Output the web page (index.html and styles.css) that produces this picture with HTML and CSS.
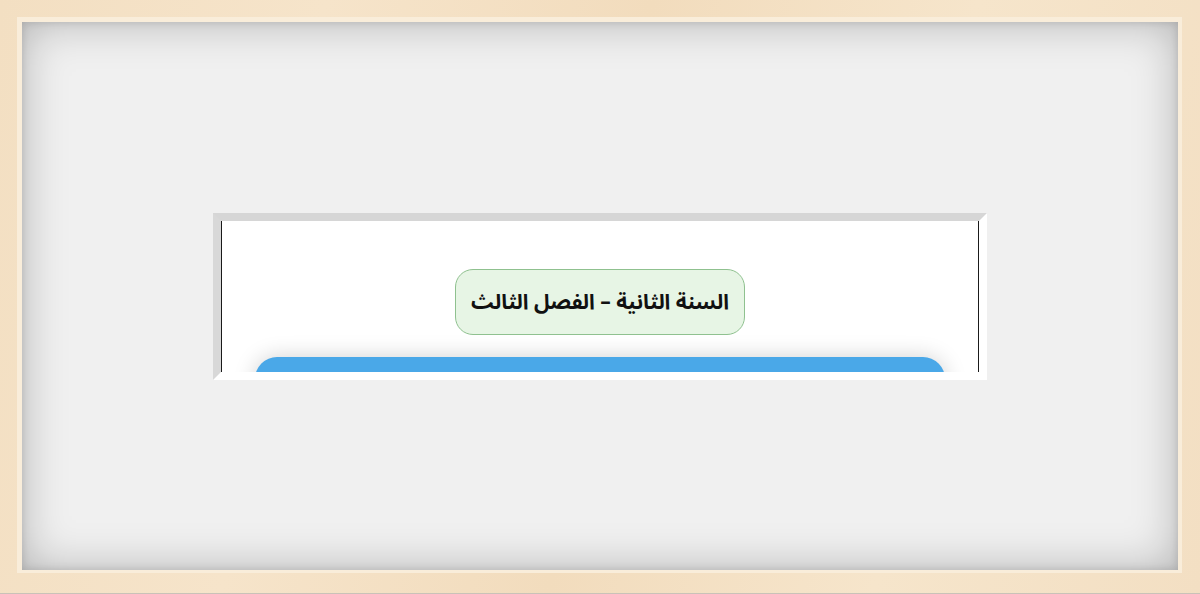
FILE: index.html
```html
<!DOCTYPE html>
<html lang="ar">
<head>
<meta charset="utf-8">
<title>Frame</title>
<link rel="stylesheet" href="styles.css">
</head>
<body>
<div class="frame">
  <div class="bevel">
    <div class="mat">
      <div class="window">
        <div class="screen">
          <div class="pill" dir="rtl">السنة الثانية – الفصل الثالث</div>
          <div class="card"></div>
        </div>
      </div>
    </div>
  </div>
</div>
</body>
</html>
```
FILE: styles.css
```css
html, body {
  margin: 0;
  padding: 0;
}
body {
  width: 1200px;
  height: 594px;
  overflow: hidden;
  font-family: "Noto Sans Arabic", "DejaVu Sans", sans-serif;
}
.frame {
  box-sizing: border-box;
  width: 1200px;
  height: 594px;
  padding: 17px 18px 20px 17px;
  border-bottom: 1px solid #c9c2b8;
  background: linear-gradient(100deg, #f3dfc2 0%, #f6e4ca 25%, #f2dcbd 50%, #f6e5cb 75%, #f3dfc3 100%);
}
.bevel {
  box-sizing: border-box;
  height: 100%;
  padding: 5px 4px 3px 5px;
  background: #f9edda;
}
.mat {
  box-sizing: border-box;
  height: 100%;
  background: #f0f0f0;
  box-shadow: inset 0 0 45px rgba(0, 0, 0, 0.26), inset 0 0 8px rgba(0, 0, 0, 0.14);
  display: flex;
  align-items: center;
  justify-content: center;
}
.window {
  width: 758px;
  height: 151px;
  border-style: solid;
  border-width: 8px;
  border-color: #d6d6d6 #ffffff #ffffff #d8d8d8;
  background: #fff;
}
.screen {
  box-sizing: border-box;
  height: 100%;
  border-left: 1px solid #1a1a1a;
  border-right: 1px solid #1a1a1a;
  overflow: hidden;
  display: flex;
  flex-direction: column;
  align-items: center;
  padding-top: 48px;
  gap: 22px;
}
.pill {
  box-sizing: border-box;
  width: 290px;
  height: 66px;
  flex-shrink: 0;
  border: 1.5px solid #8fc18f;
  border-radius: 18px;
  background: #e7f5e5;
  color: #111;
  font-size: 21px;
  font-weight: bold;
  display: flex;
  align-items: center;
  justify-content: center;
  white-space: nowrap;
}
.card {
  width: 690px;
  height: 120px;
  flex-shrink: 0;
  background: #4aa8e8;
  border-radius: 22px;
  box-shadow: 0 0 22px rgba(0, 0, 0, 0.18);
}
```
